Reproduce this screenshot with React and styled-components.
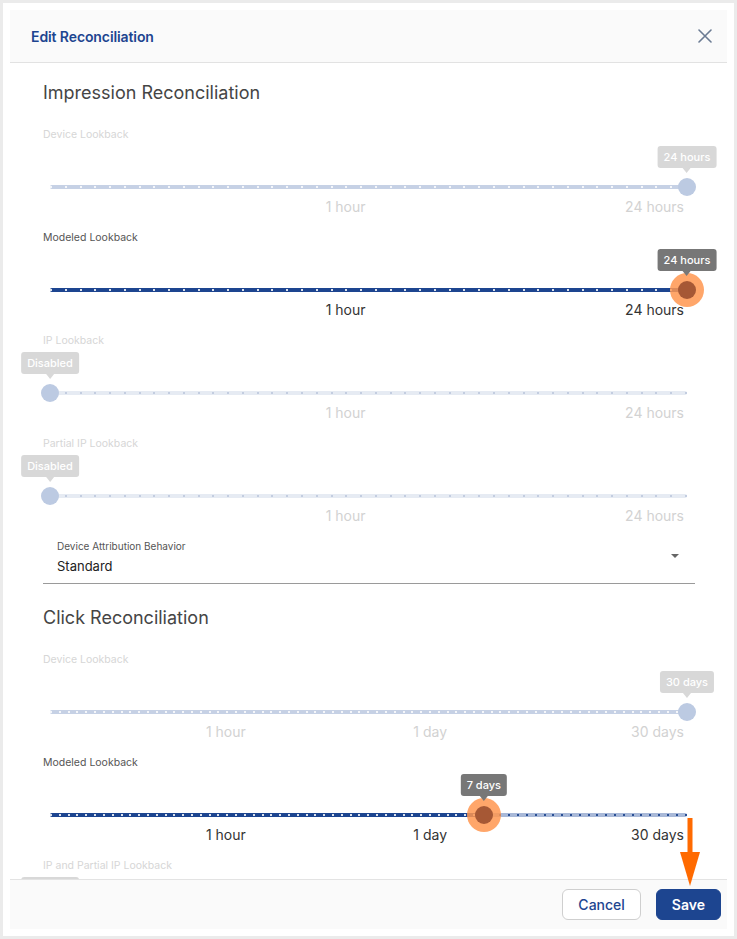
import React from "react";
import styled, { createGlobalStyle } from "styled-components";

const Global = createGlobalStyle`
  html, body { margin: 0; padding: 0; }
  body { background: #ebebeb; font-family: Inter, "Noto Sans", sans-serif; }
  * { box-sizing: border-box; }
`;

const Page = styled.div`
  position: relative;
  width: 737px;
  height: 939px;
  padding: 3px;
  background: #ebebeb;
`;

const Card = styled.div`
  height: 100%;
  background: #ffffff;
  padding: 7px;
`;

const Dialog = styled.div`
  height: 100%;
  display: flex;
  flex-direction: column;
  background: #ffffff;
`;

const Header = styled.div`
  height: 53px;
  flex: none;
  display: flex;
  align-items: center;
  justify-content: space-between;
  padding: 0 14px 0 21px;
  background: #fafafa;
  border-bottom: 1px solid #e2e2e2;
`;

const Title = styled.h2`
  margin: 0;
  font-size: 14px;
  font-weight: 600;
  color: #1d4590;
  letter-spacing: -0.1px;
`;

const CloseButton = styled.button`
  border: 0;
  background: transparent;
  padding: 0;
  width: 16px;
  height: 16px;
  display: flex;
  align-items: center;
  justify-content: center;
  cursor: pointer;
`;

const Body = styled.div`
  flex: 1;
  overflow: hidden;
  padding: 18px 32px 0 33px;
`;

const SectionTitle = styled.h3`
  margin: 0 0 23px;
  font-size: 18px;
  line-height: 24px;
  font-weight: 400;
  color: #454545;
`;

const Field = styled.div`
  margin-bottom: 14px;
`;

const FieldLabel = styled.div`
  font-size: 10.5px;
  line-height: 14px;
  color: ${(p) => (p.$disabled ? "#d6d6d6" : "#555555")};
`;

const SliderRoot = styled.div`
  position: relative;
  height: 20px;
  margin: 35px 8px 0 7px;
`;

const Rail = styled.div`
  position: absolute;
  left: 0;
  right: 0;
  top: 8px;
  height: 4px;
  border-radius: 2px;
  background: ${(p) => p.$color};
`;

const ActiveTrack = styled.div`
  position: absolute;
  left: 0;
  top: 8px;
  height: 4px;
  border-radius: 2px;
  background: ${(p) => p.$color};
`;

const Ticks = styled.div`
  position: absolute;
  left: 0;
  right: 0;
  top: 9px;
  height: 2px;
  display: flex;
  justify-content: space-between;
`;

const Tick = styled.span`
  width: 2px;
  height: 2px;
  background: ${(p) => p.$color};
`;

const Thumb = styled.div`
  position: absolute;
  top: 50%;
  width: 18px;
  height: 18px;
  border-radius: 50%;
  transform: translate(-50%, -50%);
  background: ${(p) => p.$color};
  box-shadow: ${(p) => (p.$halo ? "0 0 0 8px rgba(255, 150, 80, 0.85)" : "none")};
`;

const Tooltip = styled.div`
  position: absolute;
  left: 50%;
  bottom: calc(100% + 10px);
  transform: translateX(-50%);
  height: 22px;
  padding: 0 6px;
  display: flex;
  align-items: center;
  white-space: nowrap;
  border-radius: 3px;
  font-size: 11px;
  font-weight: 500;
  color: #ffffff;
  background: ${(p) => p.$bg};

  &::after {
    content: "";
    position: absolute;
    left: 50%;
    top: 100%;
    transform: translateX(-50%);
    border-left: 4px solid transparent;
    border-right: 4px solid transparent;
    border-top: 5px solid ${(p) => p.$bg};
  }
`;

const Marks = styled.div`
  position: relative;
  height: 20px;
  margin: 0 8px 0 7px;
`;

const MarkLabel = styled.span`
  position: absolute;
  top: 0;
  line-height: 20px;
  font-size: 14px;
  white-space: nowrap;
  transform: translateX(-100%);
  margin-left: -3px;
  color: ${(p) => (p.$disabled ? "#d2d2d2" : "#333333")};
`;

const SelectBox = styled.div`
  display: flex;
  align-items: flex-start;
  justify-content: space-between;
  margin-top: 2px;
  padding: 0 16px 7px 14px;
  border-bottom: 1px solid #9a9a9a;
  margin-bottom: 22px;
`;

const SelectText = styled.div`
  display: flex;
  flex-direction: column;
`;

const SelectLabel = styled.span`
  font-size: 10px;
  line-height: 13px;
  color: #555555;
`;

const SelectValue = styled.span`
  margin-top: 3px;
  font-size: 13px;
  line-height: 20px;
  color: #222222;
`;

const Caret = styled.span`
  margin-top: 14px;
  width: 0;
  height: 0;
  border-left: 4px solid transparent;
  border-right: 4px solid transparent;
  border-top: 4px solid #666666;
`;

const Footer = styled.div`
  height: 50px;
  flex: none;
  display: flex;
  align-items: center;
  justify-content: flex-end;
  gap: 15px;
  padding: 0 6px 0 0;
  background: #fafafa;
  border-top: 1px solid #e3e3e3;
`;

const Button = styled.button`
  height: 31px;
  padding: 0 15px;
  border-radius: 6px;
  font-family: Inter, "Noto Sans", sans-serif;
  font-size: 14px;
  font-weight: ${(p) => (p.$primary ? 600 : 500)};
  color: ${(p) => (p.$primary ? "#ffffff" : "#1d4590")};
  background: ${(p) => (p.$primary ? "#1d4590" : "#ffffff")};
  border: 1px solid ${(p) => (p.$primary ? "#1d4590" : "#cfcfcf")};
  cursor: pointer;
`;

const Pointer = styled.svg`
  position: absolute;
  left: 679px;
  top: 818px;
`;

const palette = {
  enabled: {
    rail: "#a9b9d8",
    active: "#1d4590",
    tickOn: "rgba(255,255,255,0.85)",
    tickOff: "#2a4f94",
    thumb: "#a65835",
    tip: "#777777",
  },
  disabled: {
    rail: "#e6ebf3",
    active: "#c6d1e5",
    tickOn: "rgba(255,255,255,0.8)",
    tickOff: "#c3cde0",
    thumb: "#bccae2",
    tip: "#d8d8d8",
  },
};

function Slider({ label, disabled, value, ticks, marks, tip }) {
  const c = disabled ? palette.disabled : palette.enabled;
  const pct = `${value * 100}%`;
  return (
    <Field>
      <FieldLabel $disabled={disabled}>{label}</FieldLabel>
      <SliderRoot>
        <Rail $color={c.rail} />
        <ActiveTrack $color={c.active} style={{ width: pct }} />
        <Ticks>
          {Array.from({ length: ticks }, (_, i) => (
            <Tick
              key={i}
              $color={i / (ticks - 1) <= value ? c.tickOn : c.tickOff}
            />
          ))}
        </Ticks>
        <Thumb $color={c.thumb} $halo={!disabled} style={{ left: pct }}>
          <Tooltip $bg={c.tip}>{tip}</Tooltip>
        </Thumb>
      </SliderRoot>
      <Marks>
        {marks.map((m) => (
          <MarkLabel
            key={m.text}
            $disabled={disabled}
            style={{ left: `${m.at * 100}%` }}
          >
            {m.text}
          </MarkLabel>
        ))}
      </Marks>
    </Field>
  );
}

const hourMarks = [
  { text: "1 hour", at: 0.5 },
  { text: "24 hours", at: 1 },
];

const dayMarks = [
  { text: "1 hour", at: 0.312 },
  { text: "1 day", at: 0.628 },
  { text: "30 days", at: 1 },
];

export default function App() {
  return (
    <>
      <Global />
      <Page>
        <Card>
          <Dialog>
            <Header>
              <Title>Edit Reconciliation</Title>
              <CloseButton aria-label="Close">
                <svg width="14" height="14" viewBox="0 0 14 14">
                  <path
                    d="M1 1 L13 13 M13 1 L1 13"
                    stroke="#6b7b93"
                    strokeWidth="1.6"
                    strokeLinecap="round"
                  />
                </svg>
              </CloseButton>
            </Header>
            <Body>
              <SectionTitle>Impression Reconciliation</SectionTitle>
              <Slider
                label="Device Lookback"
                disabled
                value={1}
                ticks={44}
                marks={hourMarks}
                tip="24 hours"
              />
              <Slider
                label="Modeled Lookback"
                value={1}
                ticks={44}
                marks={hourMarks}
                tip="24 hours"
              />
              <Slider
                label="IP Lookback"
                disabled
                value={0}
                ticks={44}
                marks={hourMarks}
                tip="Disabled"
              />
              <Slider
                label="Partial IP Lookback"
                disabled
                value={0}
                ticks={44}
                marks={hourMarks}
                tip="Disabled"
              />
              <SelectBox>
                <SelectText>
                  <SelectLabel>Device Attribution Behavior</SelectLabel>
                  <SelectValue>Standard</SelectValue>
                </SelectText>
                <Caret />
              </SelectBox>
              <SectionTitle>Click Reconciliation</SectionTitle>
              <Slider
                label="Device Lookback"
                disabled
                value={1}
                ticks={73}
                marks={dayMarks}
                tip="30 days"
              />
              <Slider
                label="Modeled Lookback"
                value={0.681}
                ticks={73}
                marks={dayMarks}
                tip="7 days"
              />
              <Slider
                label="IP and Partial IP Lookback"
                disabled
                value={0}
                ticks={73}
                marks={dayMarks}
                tip="Disabled"
              />
            </Body>
            <Footer>
              <Button>Cancel</Button>
              <Button $primary>Save</Button>
            </Footer>
          </Dialog>
        </Card>
        <Pointer width="22" height="70" viewBox="0 0 22 70">
          <rect x="8.5" y="0" width="5" height="36" fill="#ff6a00" />
          <polygon points="1,34 21,34 11,68" fill="#ff6a00" />
        </Pointer>
      </Page>
    </>
  );
}
